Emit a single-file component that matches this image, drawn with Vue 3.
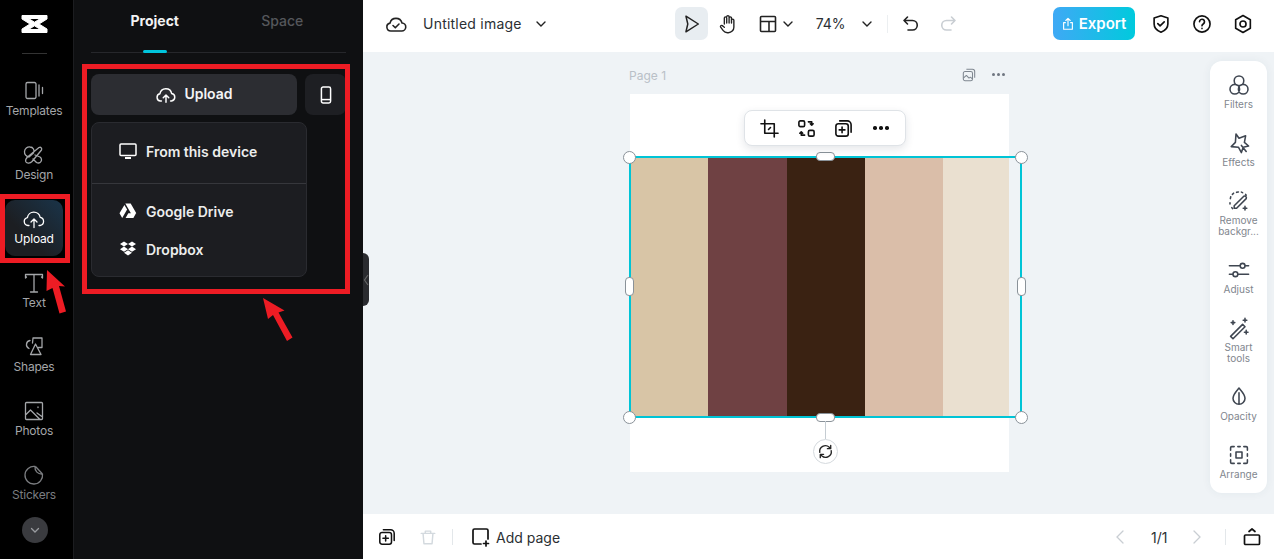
<template>
  <div class="app">
    <!-- Left rail -->
    <aside class="rail">
      <svg class="logo" viewBox="0 0 27 20" width="27" height="20">
        <path d="M1 1.500h25v3.500L18 10l8 5v3.500H1V15l8-5-8-5z M7.500 4.500l6 3.700 6-3.700z M7.500 15.500h12l-6-3.700z" fill="#fff" fill-rule="evenodd" stroke="#fff" stroke-width="1" stroke-linejoin="round" />
      </svg>
      <div class="rail-sep"></div>
      <div class="rail-list">
        <div v-for="item in railItems" :key="item.label" class="rail-item" :class="{ active: item.active, dim: item.dim }">
          <svg viewBox="0 0 24 24" width="24" height="24" fill="none" stroke="currentColor" stroke-width="1.300" stroke-linecap="round" stroke-linejoin="round">
            <path :d="item.d" />
          </svg>
          <span>{{ item.label }}</span>
        </div>
      </div>
      <div class="rail-more">
        <svg viewBox="0 0 12 12" width="12" height="12" fill="none" stroke="#9a9ca0" stroke-width="1.300" stroke-linecap="round"><path d="M2.500 4.500 6 8l3.500-3.500" /></svg>
      </div>
    </aside>

    <!-- Upload panel -->
    <section class="panel">
      <div class="tabs">
        <div class="tab on">Project</div>
        <div class="tab">Space</div>
      </div>
      <div class="upload-row">
        <button class="upload-btn">
          <svg viewBox="0 0 24 24" width="22" height="22" fill="none" stroke="#fff" stroke-width="1.600" stroke-linecap="round" stroke-linejoin="round">
            <path d="M7 18.500H6a4 4 0 0 1-.600-7.900 6.500 6.500 0 0 1 12.800-.2A4.100 4.100 0 0 1 18 18.500h-1M12 20v-7.500M9 15l3-3 3 3" />
          </svg>
          <span>Upload</span>
        </button>
        <button class="phone-btn">
          <svg viewBox="0 0 24 24" width="20" height="20" fill="none" stroke="#fff" stroke-width="1.800"><rect x="6.500" y="2.500" width="11" height="19" rx="2" /><path d="M6.500 17.500h11" /></svg>
        </button>
      </div>
      <div class="menu">
        <div class="menu-top">
          <div class="menu-row">
            <svg viewBox="0 0 18 18" width="18" height="18" fill="none" stroke="#fff" stroke-width="1.500"><rect x="1" y="2" width="16" height="11.500" rx="1" /><path d="M6 16h6" stroke-width="2" /></svg>
            From this device
          </div>
        </div>
        <div class="menu-bottom">
          <div class="menu-row">
            <svg viewBox="0 0 18 18" width="18" height="18" fill="#fff"><path d="M6.300 1.500h5.400l5.600 9.800h-5.400zM5.400 2.900l2.700 4.700-4.900 8.400-2.700-4.700zM6.600 16l2.700-4.700H17L14.400 16z" /></svg>
            Google Drive
          </div>
          <div class="menu-row">
            <svg viewBox="0 0 18 18" width="18" height="18" fill="#fff"><path d="M5 1.500 9 4 5 6.600 1 4zM13 1.500 17 4l-4 2.600L9 4zM1 9.200l4-2.600 4 2.600-4 2.500zM13 6.600l4 2.600-4 2.500-4-2.500zM5 12.700l4-2.500 4 2.500-4 2.800z" /></svg>
            Dropbox
          </div>
        </div>
      </div>
    </section>

    <!-- Main area -->
    <main class="main">
      <header class="topbar">
        <svg class="ic cloud" viewBox="0 0 24 24" width="24" height="24" fill="none" stroke="#222" stroke-width="1.600" stroke-linecap="round" stroke-linejoin="round">
          <path d="M7 19a4 4 0 0 1-1-7.900 6.200 6.200 0 0 1 12-.1A4 4 0 0 1 17.500 19zM9 13.500l2.300 2.300 3.700-3.800" />
        </svg>
        <span class="doc-name">Untitled image</span>
        <svg class="doc-caret" viewBox="0 0 12 12" width="12" height="12" fill="none" stroke="#222" stroke-width="1.400" stroke-linecap="round"><path d="M2 4l4 4 4-4" /></svg>

        <div class="tool-btn sel">
          <svg viewBox="0 0 24 24" width="22" height="22" fill="none" stroke="#222" stroke-width="1.600" stroke-linejoin="round"><path d="M6.500 3.500 20 12 6.500 20.500 8.500 12z" /></svg>
        </div>
        <svg class="hand" viewBox="0 0 24 24" width="22" height="22" fill="none" stroke="#222" stroke-width="1.500" stroke-linecap="round" stroke-linejoin="round">
          <path d="M8 12V5.500a1.300 1.300 0 0 1 2.600 0V11m0-6.800a1.300 1.300 0 0 1 2.600 0V11m0-5.500a1.300 1.300 0 0 1 2.600 0V11m0-3a1.300 1.300 0 0 1 2.600 0v7.500a6 6 0 0 1-6 6h-1a6 6 0 0 1-4.600-2.300L4 15.500c-.8-1.200.6-2.600 1.800-1.700L8 15.500" />
        </svg>
        <svg class="layout" viewBox="0 0 20 20" width="20" height="20" fill="none" stroke="#222" stroke-width="1.600"><rect x="2.500" y="2.500" width="15" height="15" rx="1" /><path d="M2.500 7.500h15M11 7.500v10" /></svg>
        <svg class="layout-caret" viewBox="0 0 12 12" width="12" height="12" fill="none" stroke="#222" stroke-width="1.400" stroke-linecap="round"><path d="M2 4l4 4 4-4" /></svg>
        <span class="zoom-val">74%</span>
        <svg class="zoom-caret" viewBox="0 0 12 12" width="12" height="12" fill="none" stroke="#222" stroke-width="1.400" stroke-linecap="round"><path d="M2 4l4 4 4-4" /></svg>
        <i class="bar-sep"></i>
        <svg class="undo" viewBox="0 0 20 20" width="20" height="20" fill="none" stroke="#222" stroke-width="1.600" stroke-linecap="round" stroke-linejoin="round"><path d="M6.500 3 3 6.500 6.500 10M3 6.500h8.500a4.700 4.700 0 0 1 0 9.500H7" /></svg>
        <svg class="redo" viewBox="0 0 20 20" width="20" height="20" fill="none" stroke="#c9ced3" stroke-width="1.600" stroke-linecap="round" stroke-linejoin="round"><path d="M13.500 3 17 6.500 13.500 10M17 6.500H8.500a4.700 4.700 0 0 0 0 9.500H13" /></svg>

        <button class="export">
          <svg viewBox="0 0 16 16" width="14" height="14" fill="none" stroke="#fff" stroke-width="1.300" stroke-linecap="round" stroke-linejoin="round"><path d="M5 6.500H3v7.500h10V6.500h-2M8 10V1.500M5.500 4 8 1.500 10.500 4" /></svg>
          Export
        </button>
        <svg class="shield" viewBox="0 0 24 24" width="22" height="22" fill="none" stroke="#111" stroke-width="1.800" stroke-linecap="round" stroke-linejoin="round"><path d="M12 3l7.500 2.500v6.500c0 4.500-3.500 7.500-7.500 9-4-1.500-7.500-4.500-7.500-9V5.500zM8.500 11.500l2.500 2.500 4.500-4.300" /></svg>
        <svg class="help" viewBox="0 0 24 24" width="22" height="22" fill="none" stroke="#111" stroke-width="1.800" stroke-linecap="round"><circle cx="12" cy="12" r="8.800" /><path d="M9.300 9.500a2.700 2.700 0 1 1 4.300 2.200c-.9.600-1.600 1.100-1.600 2.300M12 16.800v.2" /></svg>
        <svg class="gear" viewBox="0 0 24 24" width="22" height="22" fill="none" stroke="#111" stroke-width="1.800" stroke-linejoin="round"><path d="M12 2.800l8 4.600v9.200l-8 4.600-8-4.600V7.400z" /><circle cx="12" cy="12" r="3.300" /></svg>
      </header>

      <div class="stage">
        <div class="page-label">Page 1</div>
        <svg class="page-copy" viewBox="0 0 16 16" width="14" height="14" fill="none" stroke="#7f8790" stroke-width="1.200" stroke-linejoin="round"><rect x="1.500" y="4" width="10.500" height="10.500" rx="2" /><path d="M5 1.500h7a2.500 2.500 0 0 1 2.500 2.500v7M1.500 11.500 5 8.500l3 3 1.500-1 2.500 2" /></svg>
        <div class="page-dots"><i></i><i></i><i></i></div>

        <div class="page"></div>
        <div class="stripes">
          <div v-for="s in stripes" :key="s.color" :style="{ width: s.width + 'px', background: s.color }"></div>
        </div>

        <!-- Selection box and handles -->
        <div class="selection">
          <i class="corner tl"></i><i class="corner tr"></i><i class="corner bl"></i><i class="corner br"></i>
          <i class="pill h top"></i><i class="pill h bottom"></i><i class="pill v left"></i><i class="pill v right"></i>
        </div>
        <div class="rotate-line"></div>
        <div class="rotate">
          <svg viewBox="0 0 20 20" width="19" height="19" fill="none" stroke="#222" stroke-width="1.400" stroke-linecap="round" stroke-linejoin="round"><path d="M4 11a6 6 0 0 1 10-5.500l1.500 1.500M15.500 3.500V7H12M16 9a6 6 0 0 1-10 5.500L4.500 13M4.500 16.500V13H8" /></svg>
        </div>

        <div class="float-bar">
          <svg viewBox="0 0 20 20" width="19" height="19" fill="none" stroke="#111" stroke-width="1.700" stroke-linecap="round" stroke-linejoin="round"><path d="M5 1v14h14M1 5h14v14M11 9l-2 2" /></svg>
          <svg viewBox="0 0 20 20" width="19" height="19" fill="none" stroke="#111" stroke-width="1.700" stroke-linecap="round" stroke-linejoin="round"><rect x="2" y="2" width="6" height="6" rx="1.500" /><rect x="12" y="12" width="6" height="6" rx="1.500" /><path d="M12 3h3.500v3.500M14 5l1.500 1.500L17 5M8 17H4.500v-3.500M3 15l1.500-1.500L6 15" /></svg>
          <svg viewBox="0 0 20 20" width="19" height="19" fill="none" stroke="#111" stroke-width="1.700" stroke-linecap="round" stroke-linejoin="round"><rect x="2" y="5" width="13" height="13" rx="2.500" /><path d="M6 2h8a4 4 0 0 1 4 4v8M8.500 8.500v6M5.500 11.500h6" /></svg>
          <div class="bar-dots"><i></i><i></i><i></i></div>
        </div>

        <!-- Right tools -->
        <div class="tools">
          <div v-for="t in tools" :key="t.label" class="tool">
            <svg viewBox="0 0 20 20" width="24" height="24" fill="none" stroke="#3f4651" stroke-width="1.300" stroke-linecap="round" stroke-linejoin="round"><path :d="t.d" /></svg>
            <span>{{ t.label }}</span>
          </div>
        </div>
      </div>

      <footer class="bottombar">
        <svg class="foot-copy" viewBox="0 0 20 20" width="18" height="18" fill="none" stroke="#111" stroke-width="1.700" stroke-linecap="round" stroke-linejoin="round"><rect x="2" y="5" width="13" height="13" rx="2.500" /><path d="M6 2h8a4 4 0 0 1 4 4v8M8.500 8.500v6M5.500 11.500h6" /></svg>
        <svg class="foot-trash" viewBox="0 0 20 20" width="18" height="18" fill="none" stroke="#d3d9de" stroke-width="1.600" stroke-linecap="round" stroke-linejoin="round"><path d="M2.500 6h15M7 6V3.500h6V6M4.500 6l1 11.500h9L15.500 6" /></svg>
        <i class="foot-sep"></i>
        <svg class="foot-add" viewBox="0 0 20 20" width="20" height="20" fill="none" stroke="#111" stroke-width="1.700" stroke-linecap="round" stroke-linejoin="round"><path d="M10 17H3.500A1.500 1.500 0 0 1 2 15.500v-12A1.500 1.500 0 0 1 3.500 2h12A1.500 1.500 0 0 1 17 3.500V12M15 14v5M12.500 16.500h5" /></svg>
        <span class="add-page">Add page</span>
        <svg class="pg-prev" viewBox="0 0 12 16" width="12" height="16" fill="none" stroke="#c9ced3" stroke-width="1.300" stroke-linecap="round"><path d="M9 2 3 8l6 6" /></svg>
        <span class="pg-num">1/1</span>
        <svg class="pg-next" viewBox="0 0 12 16" width="12" height="16" fill="none" stroke="#c9ced3" stroke-width="1.300" stroke-linecap="round"><path d="M3 2l6 6-6 6" /></svg>
        <i class="foot-sep second"></i>
        <svg class="foot-fit" viewBox="0 0 20 20" width="20" height="20" fill="none" stroke="#111" stroke-width="1.700" stroke-linecap="round" stroke-linejoin="round"><rect x="2.500" y="8" width="15" height="9.500" rx="1" /><path d="M7 4.500 10 2l3 2.500" /></svg>
      </footer>
    </main>

    <!-- Collapse handle -->
    <div class="collapse">
      <svg viewBox="0 0 6 12" width="6" height="12" fill="none" stroke="#666" stroke-width="1.200"><path d="M5 1 1.500 6 5 11" /></svg>
    </div>

    <!-- Red annotations -->
    <div class="mark mark-rail"></div>
    <div class="mark mark-panel"></div>
    <svg class="arrows" viewBox="0 0 1274 559" width="1274" height="559">
      <path d="M47 270l-.500 21 6-3 7 25.500 6.500-2-7-25.500 6 .5z" fill="#ed1c24" />
      <path d="M263 298l5 21 5-4 14 26 5.500-3.500-14-25 6-2z" fill="#ed1c24" />
    </svg>
  </div>
</template>

<script setup>
const railItems = [
  { label: 'Templates', d: 'M5.500 3.500h7a1.500 1.500 0 0 1 1.500 1.500v13a1.500 1.500 0 0 1-1.500 1.500h-7A1.500 1.500 0 0 1 4 18V5a1.500 1.500 0 0 1 1.500-1.500zM17 6v11M20.500 8.500v6' },
  { label: 'Design', d: 'M17 4.500c2-.8 3.200.8 2.500 2.500L10 18.500c-1.800 2-5 2.200-6 .5-.8-1.500 0-3.500 1.500-5zM8 4a4 4 0 0 1 3.500 6L7 14A4 4 0 0 1 8 4zM13 12l5 2a3 3 0 0 1-3.500 5.500L11 16' },
  { label: 'Upload', active: true, d: 'M7 18.500H6a4 4 0 0 1-.600-7.900 6.500 6.500 0 0 1 12.800-.2A4.100 4.100 0 0 1 18 18.500h-1M12 20.500v-8M9 15l3-3 3 3' },
  { label: 'Text', d: 'M3.500 7V3.500h17V7M12 3.500v17.500M8.500 21h7M3.500 7l1-1M20.500 7l-1-1' },
  { label: 'Shapes', d: 'M8 5.500A4.200 4.200 0 0 0 7 13.500M11 3h9v9.500h-3.500M11 3l-.5 5M13.500 9 8.500 19.500h10.500z' },
  { label: 'Photos', d: 'M4.500 3.500h15a1 1 0 0 1 1 1v15a1 1 0 0 1-1 1h-15a1 1 0 0 1-1-1v-15a1 1 0 0 1 1-1zM3.500 16l5-5 9.500 9.500M15 14l5.500 4M16 8v.500' },
  { label: 'Stickers', dim: true, d: 'M13 3.500A8.800 8.800 0 1 0 20.500 11C16 11.500 12.500 8 13 3.500zM14 4l6 6.500' }
];

const stripes = [
  { color: '#d8c5a6', width: 78 },
  { color: '#6f4143', width: 79 },
  { color: '#3a2212', width: 78 },
  { color: '#dabea9', width: 78 },
  { color: '#eae0d0', width: 66 }
];

const tools = [
  { label: 'Filters', d: 'M10 2.500a4 4 0 1 1 0 8 4 4 0 0 1 0-8zM6.500 9.500a4 4 0 1 1 0 8 4 4 0 0 1 0-8zM13.500 9.500a4 4 0 1 1 0 8 4 4 0 0 1 0-8z' },
  { label: 'Effects', d: 'M7.500 2.500 10 6l5.500-2-1 5.500 3.500 3-4.500 1L12 18 9.500 13.500l-6-.5 3.500-3.500zM12 12l4 5' },
  { label: 'Remove backgr...', d: 'M8 2.800l1.500-.3M4.500 4.500l1-1M2.800 8l.3-1.500M2.500 11.500v1M4 15.500l.6.8M12 2.600l1 .4M15.500 4.500l.5.7M6 14l8-8a1.500 1.500 0 0 1 2 2l-8 8H6zM15 14.500v3M13.500 16h3' },
  { label: 'Adjust', d: 'M2 6.500h9M15 6.500h3M11 6.500a2 2 0 1 0 4 0 2 2 0 0 0-4 0zM2 13.500h3M9 13.500h9M5 13.500a2 2 0 1 0 4 0 2 2 0 0 0-4 0z' },
  { label: 'Smart tools', d: 'M3 17 13 7l2 2L5 19zM15 2v3M13.500 3.500h3M5 4v3M3.500 5.500h3M16 12v3M14.500 13.500h3' },
  { label: 'Opacity', d: 'M10 2.500c3 3.500 5 5.500 5 8.500a5 5 0 0 1-10 0c0-3 2-5 5-8.500zM10 6.500v9' },
  { label: 'Arrange', d: 'M3 6V4a1 1 0 0 1 1-1h2M9 3h2M14 3h2a1 1 0 0 1 1 1v2M17 9v2M17 14v2a1 1 0 0 1-1 1h-2M11 17H9M6 17H4a1 1 0 0 1-1-1v-2M3 11V9M7.500 7.500h5v5h-5z' }
];
</script>

<style>
html, body { margin: 0; background: #fff; }
</style>

<style scoped>
.app {
  position: relative;
  display: flex;
  width: 1274px;
  height: 559px;
  overflow: hidden;
  font-family: Inter, "Liberation Sans", sans-serif;
}

/* rail */
.rail {
  width: 74px;
  flex-shrink: 0;
  background: #000;
  border-right: 1px solid #1c1d20;
  box-sizing: border-box;
  display: flex;
  flex-direction: column;
  align-items: flex-start;
  padding-top: 14px;
}
.logo { display: block; margin-left: 21px; }
.rail-sep { width: 25px; height: 1px; background: #333; margin: 19px 0 0 22px; }
.rail-list { display: flex; flex-direction: column; margin: 18px 0 0 5px; }
.rail-item {
  width: 58px;
  height: 56px;
  box-sizing: border-box;
  padding-bottom: 2px;
  margin-bottom: 8px;
  border-radius: 10px;
  display: flex;
  flex-direction: column;
  align-items: center;
  justify-content: center;
  color: #a4a6a9;
  font-size: 12px;
  line-height: 16px;
  letter-spacing: -0.2px;
  gap: 0;
}
.rail-item span { white-space: nowrap; }
.rail-item.dim { color: #7b7d80; }
.rail-item.active {
  color: #fff;
  background: linear-gradient(45deg, #1c1e22 35%, #1a3449);
}
.rail-more {
  width: 26px;
  height: 26px;
  border-radius: 50%;
  background: #3a3b3f;
  display: flex;
  align-items: center;
  justify-content: center;
  margin: -3px 0 0 22px;
}

/* panel */
.panel {
  width: 289px;
  flex-shrink: 0;
  background: #0f1012;
  box-sizing: border-box;
  padding: 0 17px;
}
.tabs {
  display: flex;
  height: 52px;
  border-bottom: 1px solid #26272b;
  margin-bottom: 21px;
}
.tab {
  flex: 1;
  position: relative;
  text-align: center;
  line-height: 42px;
  font-size: 14px;
  font-weight: 500;
  color: #55575b;
}
.tab.on { color: #f2f2f3; font-weight: 700; }
.tab.on::after {
  content: "";
  position: absolute;
  left: 52px;
  bottom: -1px;
  width: 24px;
  height: 3px;
  border-radius: 2px;
  background: #00c4dc;
}
.upload-row { display: flex; gap: 8px; width: 255px; overflow: hidden; }
.upload-btn, .phone-btn {
  border: 0;
  height: 41px;
  font: inherit;
  border-radius: 8px;
  display: flex;
  align-items: center;
  justify-content: center;
  flex-shrink: 0;
}
.upload-btn {
  width: 206px;
  gap: 7px;
  background: #2c2d32;
  color: #f4f4f5;
  font-size: 14px;
  font-weight: 600;
}
.upload-btn span { margin-top: -3px; }
.phone-btn { width: 41px; background: #1e1f23; padding: 0; }
.menu {
  width: 216px;
  height: 155px;
  box-sizing: border-box;
  margin-top: 7px;
  background: #1c1d21;
  border: 1px solid #2a2b30;
  border-radius: 8px;
}
.menu-top { height: 61px; padding-top: 9px; box-sizing: border-box; border-bottom: 1px solid #36373c; }
.menu-bottom { padding-top: 8px; }
.menu-row {
  display: flex;
  align-items: center;
  gap: 9px;
  height: 38px;
  padding-left: 27px;
  color: #eceded;
  font-size: 14px;
  font-weight: 600;
}

/* main */
.main { flex: 1; display: flex; flex-direction: column; min-width: 0; background: #eff3f6; }
.topbar {
  height: 52px;
  flex-shrink: 0;
  background: #fff;
  display: flex;
  align-items: center;
  padding-bottom: 5px;
  box-sizing: border-box;
}
.cloud { margin-left: 21px; }
.doc-name { margin-left: 15px; font-size: 14px; letter-spacing: 0.22px; color: #2b2f33; white-space: nowrap; }
.doc-caret { margin-left: 13px; }
.tool-btn {
  width: 33px;
  height: 33px;
  border-radius: 7px;
  display: flex;
  align-items: center;
  justify-content: center;
}
.tool-btn.sel { margin-left: 128px; background: #e8edf1; }
.hand { margin-left: 9px; }
.layout { margin-left: 19px; }
.layout-caret { margin-left: 4px; }
.zoom-val { margin-left: 22px; font-size: 14px; color: #2b2f33; }
.zoom-caret { margin-left: 15px; }
.bar-sep { width: 1px; height: 18px; background: #eceff1; margin-left: 14px; }
.undo { margin-left: 13px; }
.redo { margin-left: 17px; }
.export {
  margin-left: 95px;
  width: 82px;
  height: 33px;
  border: 0;
  border-radius: 7px;
  background: linear-gradient(90deg, #3fa9f5, #00cadd);
  color: #fff;
  font: inherit;
  font-size: 15px;
  font-weight: 600;
  display: flex;
  align-items: center;
  justify-content: center;
  gap: 4px;
  padding: 0;
}
.shield { margin-left: 15px; }
.help { margin-left: 19px; }
.gear { margin-left: 19px; }

/* canvas */
.stage { position: relative; flex: 1; min-height: 0; }
.page-label { position: absolute; left: 266px; top: 17px; font-size: 12px; line-height: 14px; color: #b9c0c7; }
.page-copy { position: absolute; left: 599px; top: 16px; }
.page-dots { position: absolute; left: 629px; top: 21px; display: flex; gap: 2px; }
.page-dots i { width: 3px; height: 3px; border-radius: 50%; background: #6f7680; }
.page { position: absolute; left: 267px; top: 42px; width: 379px; height: 378px; background: #fff; }
.stripes { position: absolute; left: 267px; top: 105px; height: 260px; display: flex; }
.selection {
  position: absolute;
  left: 266px;
  top: 104px;
  width: 393px;
  height: 262px;
  box-sizing: border-box;
  border: 2px solid #00c4d6;
}
.corner {
  position: absolute;
  width: 13px;
  height: 13px;
  box-sizing: border-box;
  border: 1px solid #8a9299;
  border-radius: 50%;
  background: #fff;
}
.corner.tl { left: -8px; top: -7.500px; }
.corner.tr { right: -8px; top: -7.500px; }
.corner.bl { left: -8px; bottom: -7.500px; }
.corner.br { right: -8px; bottom: -7.500px; }
.pill {
  position: absolute;
  box-sizing: border-box;
  background: #fff;
  border: 1px solid #8a9299;
  border-radius: 4px;
}
.pill.h { width: 19px; height: 9px; left: 185px; }
.pill.top { top: -6px; }
.pill.bottom { bottom: -6px; }
.pill.v { width: 9px; height: 19px; top: 119px; }
.pill.left { left: -6px; }
.pill.right { right: -6px; }
.rotate-line { position: absolute; left: 462px; top: 369px; width: 1px; height: 18px; background: #c5ccd2; }
.rotate {
  position: absolute;
  left: 450px;
  top: 387px;
  width: 25px;
  height: 25px;
  box-sizing: border-box;
  border: 1px solid #d5dade;
  border-radius: 50%;
  background: #fff;
  display: flex;
  align-items: center;
  justify-content: center;
}
.float-bar {
  position: absolute;
  left: 381px;
  top: 58px;
  width: 162px;
  height: 36px;
  box-sizing: border-box;
  background: #fff;
  border: 1px solid #dfe3e7;
  border-radius: 8px;
  box-shadow: 0 3px 8px rgba(30, 50, 70, 0.12);
  display: flex;
  align-items: center;
  padding-left: 15px;
  gap: 18px;
}
.bar-dots { display: flex; gap: 2.500px; margin-left: 2px; }
.bar-dots i { width: 3.500px; height: 3.500px; border-radius: 50%; background: #111; }
.tools {
  position: absolute;
  left: 847px;
  top: 9px;
  width: 57px;
  height: 432px;
  box-sizing: border-box;
  padding-top: 12px;
  background: #fff;
  border-radius: 12px;
  box-shadow: 0 0 10px rgba(40, 60, 80, 0.06);
}
.tool {
  display: flex;
  flex-direction: column;
  align-items: center;
  padding-bottom: 23px;
  text-align: center;
}
.tool svg { display: block; margin-bottom: 2px; margin-top: -2px; height: 24px; }
.tool:first-child svg { margin-top: 0; }
.tool span {
  font-size: 10px;
  line-height: 11px;
  color: #7f868e;
  width: 48px;
}

/* footer */
.bottombar {
  height: 45px;
  flex-shrink: 0;
  background: #fff;
  display: flex;
  align-items: center;
}
.foot-copy { margin-left: 15px; }
.foot-trash { margin-left: 23px; }
.foot-sep { width: 1px; height: 16px; background: #e3e7ea; margin-left: 15px; }
.foot-sep.second { margin-left: 22px; }
.foot-add { margin-left: 18px; }
.add-page { margin-left: 5px; padding-top: 2px; font-size: 14px; color: #2b2f33; }
.pg-prev { margin-left: 554px; }
.pg-num { margin-left: 25px; padding-top: 2px; font-size: 14px; color: #2b2f33; }
.pg-next { margin-left: 23px; }
.foot-fit { margin-left: 16px; }

/* overlays */
.collapse {
  position: absolute;
  left: 363px;
  top: 253px;
  width: 6px;
  height: 53px;
  background: #2a2b2f;
  border-radius: 0 8px 8px 0;
  display: flex;
  align-items: center;
}
.mark {
  position: absolute;
  box-sizing: border-box;
  border: 5px solid #ed1c24;
}
.mark-rail { left: 0; top: 194px; width: 70px; height: 69px; }
.mark-panel { left: 82px; top: 64px; width: 268px; height: 230px; }
.arrows { position: absolute; left: 0; top: 0; pointer-events: none; }
</style>
